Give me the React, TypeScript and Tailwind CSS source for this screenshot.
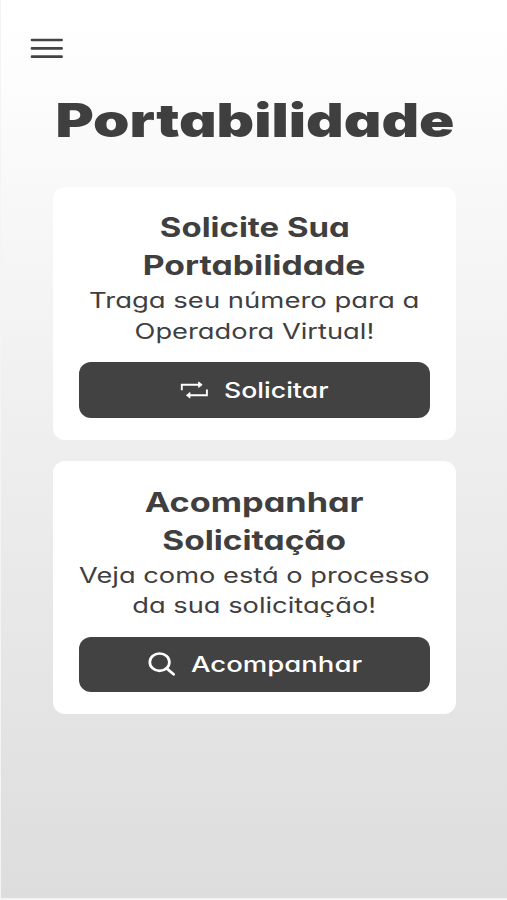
import type { ReactNode } from "react";

type Line = { text: string; stretch: string };

type ActionCardProps = {
  title: Line[];
  description: Line[];
  action: Line;
  icon: ReactNode;
  buttonClass: string;
};

function TextLine({ text, stretch }: Line) {
  return <span className={`block w-max ${stretch}`}>{text}</span>;
}

function MenuIcon() {
  return (
    <svg className="h-[21px] w-[34px]" viewBox="0 0 34 21" fill="none" stroke="#444444" strokeWidth="2.7" strokeLinecap="round">
      <path d="M3 2H32.6M3 10.4H32.6M3 18.7H32.6" />
    </svg>
  );
}

function RepeatIcon() {
  return (
    <svg className="h-[18px] w-[28px]" viewBox="0 0 28 18" fill="none" stroke="white" strokeWidth="1.9">
      <path d="M1.8 9.2V3.7H20M26.9 8.6V14.3H9" />
      <path d="M18.6 .9V6.5L22.2 3.7ZM10 11.5V17.1L6.4 14.3Z" fill="white" strokeWidth="0.8" strokeLinejoin="round" />
    </svg>
  );
}

function SearchIcon() {
  return (
    <svg className="h-[24px] w-[28px]" viewBox="0 0 28 24" fill="none" stroke="white" strokeWidth="2.7" strokeLinecap="round">
      <ellipse cx="11.6" cy="10.2" rx="9.8" ry="8.7" />
      <path d="M18.6 16.4L25.6 22.3" />
    </svg>
  );
}

function ActionCard({ title, description, action, icon, buttonClass }: ActionCardProps) {
  return (
    <section className="h-[253px] rounded-xl bg-white px-[26px] pt-[22.5px]">
      <h2 className="flex flex-col items-center text-[27px] font-[650] leading-[38px]">
        {title.map((line) => (
          <TextLine key={line.text} {...line} />
        ))}
      </h2>
      <p className="flex flex-col items-center text-[21.5px] leading-[30.5px]">
        {description.map((line) => (
          <TextLine key={line.text} {...line} />
        ))}
      </p>
      <button className={`mt-4 flex h-[55.5px] w-full items-center rounded-xl bg-[#424242] text-[21.5px] font-[550] text-white ${buttonClass}`}>
        {icon}
        <span className={`block w-max origin-left ${action.stretch}`}>{action.text}</span>
      </button>
    </section>
  );
}

export default function App() {
  return (
    <div className="h-[900px] w-[507px] overflow-hidden border-b-2 border-l border-[#f4f4f4] bg-linear-to-b from-white from-2% via-[#eeeeee] via-50% to-[#dddddd] font-['Inter',sans-serif] text-[#3f3f3f] [font-feature-settings:'cv11']">
      <header className="pl-[28px] pt-[38px]">
        <button className="block" aria-label="Menu">
          <MenuIcon />
        </button>
      </header>

      <main className="pl-[52px] pr-[51px]">
        <h1 className="mt-[33px] flex h-[94.5px] justify-center text-[46.5px] font-black leading-[57px]">
          <TextLine text="Portabilidade" stretch="scale-x-[1.255]" />
        </h1>

        <div className="flex flex-col gap-[21.5px]">
          <ActionCard
            title={[
              { text: "Solicite Sua", stretch: "scale-x-[1.22]" },
              { text: "Portabilidade", stretch: "scale-x-[1.25]" },
            ]}
            description={[
              { text: "Traga seu número para a", stretch: "scale-x-[1.278]" },
              { text: "Operadora Virtual!", stretch: "scale-x-[1.27]" },
            ]}
            action={{ text: "Solicitar", stretch: "scale-x-[1.24]" }}
            icon={<RepeatIcon />}
            buttonClass="gap-[16px] pl-[101px]"
          />
          <ActionCard
            title={[
              { text: "Acompanhar", stretch: "scale-x-[1.27]" },
              { text: "Solicitação", stretch: "scale-x-[1.24]" },
            ]}
            description={[
              { text: "Veja como está o processo", stretch: "scale-x-[1.267]" },
              { text: "da sua solicitação!", stretch: "scale-x-[1.268]" },
            ]}
            action={{ text: "Acompanhar", stretch: "scale-x-[1.28]" }}
            icon={<SearchIcon />}
            buttonClass="gap-[15px] pl-[69px]"
          />
        </div>
      </main>
    </div>
  );
}
